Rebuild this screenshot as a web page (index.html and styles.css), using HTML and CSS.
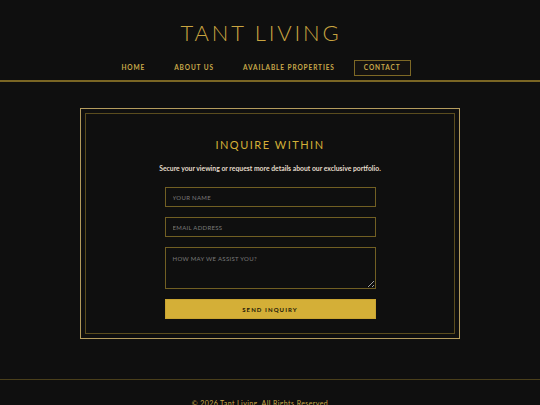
FILE: index.html
```html
<!DOCTYPE html>
<html lang="en">
<head>
<meta charset="utf-8">
<title>Tant Living — Contact</title>
<link rel="stylesheet" href="styles.css">
</head>
<body>
<header class="site-header">
  <div class="brand">TANT LIVING</div>
  <nav class="nav">
    <a class="nav-link" href="#">HOME</a>
    <a class="nav-link" href="#">ABOUT US</a>
    <a class="nav-link" href="#">AVAILABLE PROPERTIES</a>
    <a class="nav-link active" href="#">CONTACT</a>
  </nav>
</header>
<main class="main">
  <section class="frame">
    <div class="frame-inner">
      <h1 class="title">INQUIRE WITHIN</h1>
      <p class="lead">Secure your viewing or request more details about our exclusive portfolio.</p>
      <form class="form">
        <input class="field" type="text" placeholder="YOUR NAME">
        <input class="field" type="email" placeholder="EMAIL ADDRESS">
        <textarea class="field area" placeholder="HOW MAY WE ASSIST YOU?"></textarea>
        <button class="submit" type="button">SEND INQUIRY</button>
      </form>
    </div>
  </section>
</main>
<footer class="site-footer">
  <p class="copy">© 2026 Tant Living. All Rights Reserved.</p>
</footer>
</body>
</html>
```

FILE: styles.css
```css
* { box-sizing: border-box; }
html, body { margin: 0; padding: 0; }
body {
  background: #0f0f0f;
  font-family: "Lato", "Open Sans", sans-serif;
  color: #e6ddc8;
  overflow: hidden;
}
.site-header {
  padding: 18px 18px 4px 0;
  border-bottom: 2px solid rgba(212, 175, 55, 0.55);
  text-align: center;
}
.brand {
  font-size: 22px;
  line-height: 30px;
  font-weight: 300;
  letter-spacing: 2.8px;
  color: #c9a440;
}
.nav {
  margin-top: 12px;
  display: flex;
  justify-content: center;
  gap: 9px;
}
.nav-link {
  display: block;
  font-size: 6.5px;
  line-height: 10px;
  font-weight: 700;
  letter-spacing: 0.9px;
  color: #c9a94a;
  text-decoration: none;
  padding: 2px 9px;
  border: 1px solid transparent;
}
.nav-link.active {
  border-color: rgba(212, 175, 55, 0.55);
  background: #141210;
}
.main { padding-top: 26px; }
.frame {
  width: 380px;
  margin: 0 auto;
  border: 1px solid #b49c5e;
  padding: 4px;
}
.frame-inner {
  border: 1px solid rgba(212, 175, 55, 0.38);
  padding: 24px 0 14px;
  text-align: center;
}
.title {
  margin: 0;
  font-size: 11px;
  line-height: 14px;
  font-weight: 400;
  letter-spacing: 1.5px;
  color: #d4af37;
}
.lead {
  margin: 11px 0 0;
  font-size: 6.8px;
  line-height: 10px;
  font-weight: 700;
  color: #e4dccb;
}
.form {
  width: 211px;
  margin: 14px auto 0;
  display: flex;
  flex-direction: column;
  gap: 10px;
}
.field {
  display: block;
  width: 100%;
  height: 20px;
  background: transparent;
  border: 1px solid rgba(212, 175, 55, 0.5);
  padding: 0 7px;
  font-family: "Lato", "Open Sans", sans-serif;
  font-size: 6px;
  letter-spacing: 0.3px;
  color: #ddd;
  outline: none;
}
.field::placeholder { color: #7a7a7a; }
.area {
  height: 42px;
  padding-top: 7px;
  resize: vertical;
}
.submit {
  height: 20px;
  border: 1px solid #c9a432;
  background: #d4af37;
  color: #1b1708;
  font-family: "Lato", "Open Sans", sans-serif;
  font-size: 6px;
  font-weight: 700;
  letter-spacing: 1.1px;
  padding: 0;
}
.site-footer {
  margin-top: 40px;
  border-top: 1px solid rgba(212, 175, 55, 0.3);
  padding: 18px 18px 0 0;
  text-align: center;
}
.copy {
  margin: 0;
  font-size: 7px;
  line-height: 10px;
  letter-spacing: 0.4px;
  color: #c9a94a;
}
```
